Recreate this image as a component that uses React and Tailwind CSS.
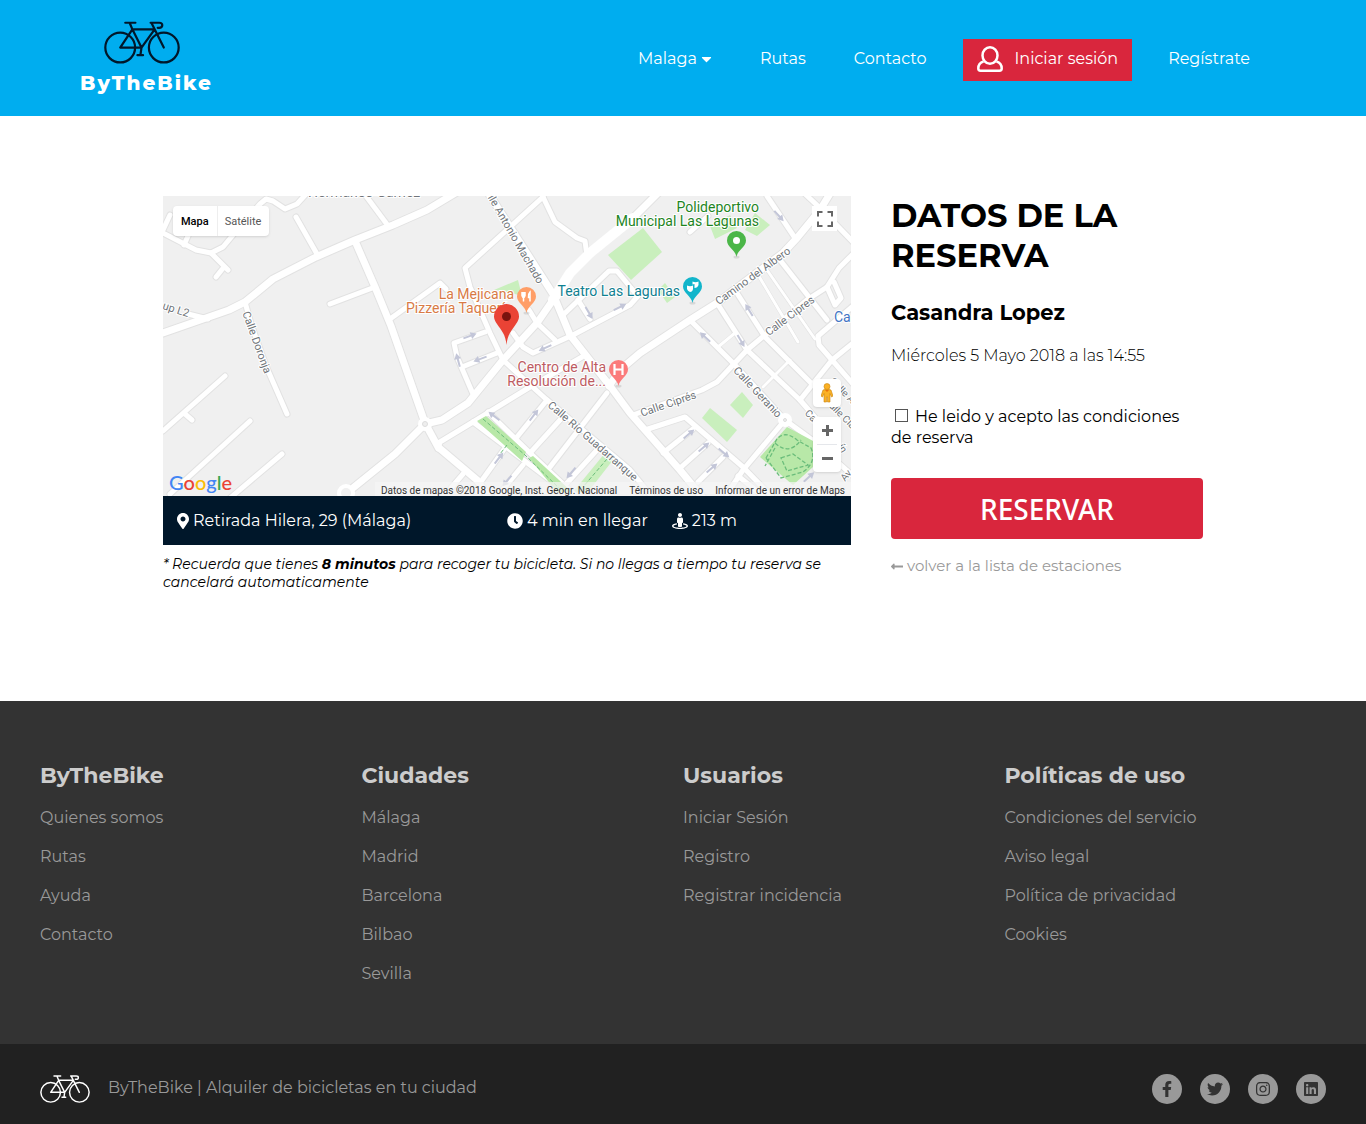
import { FaCaretDown, FaClock, FaFacebookF, FaInstagram, FaLinkedin, FaLongArrowAltLeft, FaMapMarkerAlt, FaStreetView, FaTwitter } from "react-icons/fa";

const wideRoads = [
  "M0 137 L66 114 L82 106 L110 83 L153 61 L192 44 L230 29 L264 14 L294 -4",
  "M180 300 L232 258 L262 228 L279 224 L305 207 L340 164 L374 127 L390 104 L407 77 L427 57 L470 22 L496 -4",
  "M326 -2 L390 98 L407 139 L447 190 L467 217 L517 274 L540 302",
  "M446 190 L457 174 L477 157 L527 124 L554 107 L620 57 L634 42 L657 14 L668 -4",
  "M192 45 L212 91 L228 130 L262 227 L275 251 L314 284 L326 302",
];
const roads = [
  "M-2 36 L33 54 L48 57 L60 51 L70 39 L97 8 L103 3 L110 5 L122 13 L134 8 L145 -4",
  "M7 19 L0 34", "M25 40 L21 49", "M48 57 L65 74", "M61 71 L53 81", "M133 21 L154 58", "M200 -4 L226 31",
  "M167 108 L212 91", "M25 118 L45 123", "M82 106 L88 128 L103 170 L124 218", "M0 235 L62 180", "M22 218 L29 224",
  "M7 298 L87 225", "M66 303 L119 258",
  "M380 1 L302 72 L307 91 L327 137 L340 164 L384 204 L467 274 L490 302",
  "M380 1 L392 26 L414 42 L422 45 L424 60",
  "M227 123 L277 87 L283 93", "M322 136 L291 147 L294 161 L310 198", "M299 171 L334 157",
  "M350 137 L360 151 L370 157 L410 139 L467 109 L475 100 L468 92 L454 75 L446 75 L400 119",
  "M374 127 L392 144", "M366 114 L374 127", "M415 104 L427 123", "M419 161 L367 191 L310 226 L277 246 L275 253",
  "M310 226 L387 284 L405 302", "M325 216 L367 257 L413 300", "M384 204 L354 241", "M397 224 L367 257",
  "M444 197 L387 271", "M434 254 L404 287", "M342 252 L317 287", "M360 269 L332 303", "M300 278 L288 292",
  "M470 219 L539 194 L554 186 L584 154 L644 104 L664 91 L676 72 L690 58",
  "M527 124 L570 167 L622 224", "M622 224 L580 274 L564 298", "M622 224 L652 246 L690 280",
  "M554 107 L584 154 L637 204 L656 226", "M572 94 L602 141 L648 187", "M617 64 L664 124",
  "M690 110 L655 140 L656 149 L669 164 L690 188", "M637 204 L669 164 L690 147", "M604 0 L632 42",
  "M640 -4 L657 12 L690 46", "M482 234 L522 221 L580 271 L610 302", "M500 257 L530 233", "M516 273 L545 247",
  "M535 286 L560 261", "M527 36 L545 20", "M664 91 L672 109 L678 102 L671 86", "M575 280 L600 300",
];
const thinRoads = ["M594 77 L635 146", "M604 74 L652 143", "M555 151 L572 137", "M600 191 L627 164"];
const parks = [
  "445,59 480,32 499,56 468,84", "547,30 567,19 574,32 552,43", "582,34 592,17 607,29 594,40",
  "495,94 502,87 512,101 504,107", "539,222 547,212 574,234 564,246", "567,209 579,196 590,209 580,222",
  "331,94 355,84 359,100 345,96", "442,257 450,264 425,296 410,296",
];
const arrows = [
  [307, 140, -20], [317, 163, 160], [295, 164, 255], [457, 111, -27], [426, 117, 60], [382, 152, 155], [331, 220, 218],
  [371, 219, -52], [336, 262, -52], [408, 277, 130], [344, 285, 130], [542, 141, 222], [586, 114, 238], [578, 145, 60],
  [616, 20, 48], [526, 238, -40], [541, 251, -40], [561, 257, 40], [549, 272, -40], [646, 281, -42],
];
const streetLabels = [
  ["Calle Doronja", 82, 116, 70, 11], ["up L2", 0, 110, 18, 11], ["lle Antonio Machado", 327, 0, 60, 11],
  ["Hermanos Gámez", 145, -3, 0, 14], ["Camino del Albero", 554, 107, -36, 11], ["Calle Cipres", 604, 138, -37, 11],
  ["Calle Ciprés", 478, 218, -19, 11], ["Calle Geranio", 572, 173, 47, 11], ["Calle Río Guadarranque", 386, 208, 41, 11],
  ["Calle A", 668, 184, 45, 10], ["Calle Clavel", 663, 204, 45, 10], ["Calle", 643, 216, 45, 10],
  ["ín", 677, 249, 60, 10], ["Av.", 680, 284, -50, 10],
];

function Bike({ className }) {
  return (
    <svg viewBox="0 0 75 42" fill="none" stroke="currentColor" strokeWidth="2.2" strokeLinejoin="round" strokeLinecap="round" className={className} aria-hidden="true">
      <circle cx="16" cy="26" r="14.7" />
      <circle cx="59" cy="26" r="14.7" />
      <path d="M21 1.5H31M25.5 2L28 8L37 26H16L28 8H50L37 26L36 33M33 33.5H38.5M46 1.5H54.5Q57.5 1.5 57.5 4T54.5 6.5H53M47 2L59 26" />
    </svg>
  );
}

function Pin({ x, y, color, children }) {
  return (
    <g transform={`translate(${x} ${y})`}>
      <ellipse cy="0" rx="3" ry="1.500" fill="#000" opacity="0.1" />
      <path d="M0 0C-1-7-9.500-10-9.500-16.500a9.500 9.500 0 0 1 19 0C9.500-10 1-7 0 0Z" fill={color} />
      {children}
    </g>
  );
}

function Poi({ lines, x, y, anchor, color }) {
  return (
    <g fill={color} stroke="#fff" strokeWidth="2" paintOrder="stroke" textAnchor={anchor} fontSize="14">
      {lines.map((line, i) => (
        <text key={line} x={x} y={y + i * 14}>{line}</text>
      ))}
    </g>
  );
}

function MapDrawing() {
  return (
    <svg viewBox="0 0 688 300" preserveAspectRatio="xMidYMid slice" className="block h-full w-full font-['Roboto',sans-serif]" role="img" aria-label="Mapa de la estación">
      <rect x="-500" y="-300" width="1700" height="900" fill="#f0f0f0" />
      {parks.map((p) => <polygon key={p} points={p} fill="#c9efbd" />)}
      <g fill="none" strokeLinejoin="round" strokeLinecap="round">
        <g stroke="#e2e2e2">
          <g strokeWidth="7">{roads.map((d) => <path key={d} d={d} />)}</g>
          <g strokeWidth="9">{wideRoads.map((d) => <path key={d} d={d} />)}</g>
          <g strokeWidth="4">{thinRoads.map((d) => <path key={d} d={d} />)}</g>
        </g>
        <g stroke="#fff">
          <g strokeWidth="3">{thinRoads.map((d) => <path key={d} d={d} />)}</g>
          <g strokeWidth="5">{roads.map((d) => <path key={d} d={d} />)}</g>
          <g strokeWidth="7">{wideRoads.map((d) => <path key={d} d={d} />)}</g>
        </g>
        <path d="M390 104L407 77L427 57L470 22" stroke="#fff" strokeWidth="10" />
      </g>
      <polygon points="314,225 323,220 363,256 359,265" fill="#b8e8a8" />
      <polygon points="366,262 370,260 409,296 394,296" fill="#b8e8a8" />
      <polygon points="597,261 624,231 652,246 660,262 630,289" fill="#b8e8a8" />
      <g fill="none" stroke="#6bbd7b" strokeDasharray="4 2">
        <path d="M320 223L362 259L398 294M344 249L337 258M444 263L420 291" />
        <path d="M603 262L614 243Q622 234 634 244L648 252Q654 266 640 276L618 282ZM612 247Q626 260 638 244M618 262L630 258L645 269L624 275ZM612 252L602 270" strokeWidth="1.300" />
      </g>
      <g stroke="#ddd">
        <circle cx="262" cy="228" r="7" fill="#fff" stroke="none" />
        <circle cx="262" cy="228" r="2.500" fill="#eee" />
        <circle cx="622" cy="224" r="7" fill="#fff" stroke="none" />
        <circle cx="622" cy="224" r="1.500" fill="#eee" />
        <circle cx="183" cy="297" r="7" fill="#f0f0f0" stroke="#fff" strokeWidth="4" />
      </g>
      {arrows.map(([x, y, a]) => (
        <path key={`${x}-${y}`} transform={`translate(${x} ${y}) rotate(${a})`} d="M-7-1H1V-3.500L7 0L1 3.500V1H-7Z" fill="#c3c6d8" />
      ))}
      <g fill="#70757a" stroke="#fff" strokeWidth="2" paintOrder="stroke">
        {streetLabels.map(([text, x, y, angle, size]) => (
          <text key={`${text}-${x}`} transform={`translate(${x} ${y}) rotate(${angle})`} fontSize={size} dominantBaseline="middle">{text}</text>
        ))}
      </g>
      <Poi lines={["Polideportivo", "Municipal Las Lagunas"]} x={596} y={16} anchor="end" color="#1e851e" />
      <Poi lines={["Teatro Las Lagunas"]} x={517} y={100} anchor="end" color="#0f8090" />
      <Poi lines={["La Mejicana"]} x={351} y={103} anchor="end" color="#d87a45" />
      <Poi lines={["Pizzería Taquería"]} x={243} y={117} anchor="start" color="#d87a45" />
      <Poi lines={["Centro de Alta", "Resolución de..."]} x={443} y={176} anchor="end" color="#bd5b62" />
      <Poi lines={["Ca"]} x={671} y={126} anchor="start" color="#4274c4" />
      <Pin x={573.5} y={61} color="#4bb648"><circle cy="-16.500" r="3.500" fill="#fff" /></Pin>
      <Pin x={529.5} y={107} color="#12b5cb">
        <path d="M-5.500-17.500Q-2.500-16 .5-17.500V-14Q0-11-2.500-11Q-5-12-5.500-14ZM0-21.500Q3-20 6-21.500V-18Q5-15 2-15V-19L0-18.500Z" fill="#fff" />
      </Pin>
      <Pin x={363.5} y={117} color="#ff9e67">
        <path d="M-4.500-21V-17.500Q-4-15.500-3-15.500V-11.500M-1.500-21V-17.500Q-2-15.500-3-15.500V-21M3.500-11.500V-21Q1.500-19 2-15.500H3.500" fill="none" stroke="#fff" strokeWidth="1.500" />
      </Pin>
      <Pin x={455.5} y={190} color="#fb7b7b">
        <path d="M-4-22V-11M4-22V-11M-4-16.500H4" fill="none" stroke="#fff" strokeWidth="2.200" />
      </Pin>
      <path d="M343.500 149C342.500 138 338 134 334 128C332 125 331 123 331 120.500a12.500 12.500 0 0 1 25 0C356 123 355 125 353 128C349 134 344.500 138 343.500 149Z" fill="#ea4335" />
      <circle cx="343.500" cy="120.500" r="4.500" fill="#7a130e" />
    </svg>
  );
}

function MapPanel() {
  return (
    <div className="relative h-[300px] overflow-hidden font-['Roboto',sans-serif]">
      <MapDrawing />
      <div className="absolute left-[10px] top-[10px] flex h-[30px] rounded-sm bg-white text-[11px] shadow">
        <button type="button" className="px-2 pt-0.5 font-medium text-black shadow-[1px_0_0_#eee]">Mapa</button>
        <button type="button" className="px-2 pt-0.5 text-[#565656]">Satélite</button>
      </div>
      <button type="button" aria-label="Pantalla completa" className="absolute right-[14px] top-[10px] flex size-[25px] items-center justify-center bg-white">
        <svg viewBox="0 0 16 16" className="size-4" fill="none" stroke="#666" strokeWidth="2"><path d="M1 5.500V1H5.500M10.500 1H15V5.500M15 10.500V15H10.500M5.500 15H1V10.500" /></svg>
      </button>
      <button type="button" aria-label="Street View" className="absolute bottom-[89px] right-[10px] flex size-7 items-center justify-center rounded-sm bg-white shadow">
        <svg viewBox="0 0 12 20" className="h-5 w-3">
          <path d="M2 7Q6 5 10 7L12 13L10.500 14L9 10.500V19H6.500V14H5.500V19H3V10.500L1.500 14L0 13Z" fill="#fbb124" stroke="#c98510" strokeWidth=".6" />
          <circle cx="6" cy="3.500" r="3" fill="#fbb124" stroke="#c98510" strokeWidth=".6" />
          <path d="M4 7H8L6 9Z" fill="#e8710a" />
        </svg>
      </button>
      <div className="absolute bottom-[24px] right-[10px] flex w-7 flex-col items-center rounded-sm bg-white shadow">
        <button type="button" aria-label="Acercar" className="flex h-[27px] w-7 items-center justify-center">
          <svg viewBox="0 0 11 11" className="size-[11px]" stroke="#666" strokeWidth="3"><path d="M0 5.500H11M5.500 0V11" /></svg>
        </button>
        <span className="h-px w-5 bg-gray-200" />
        <button type="button" aria-label="Alejar" className="flex h-[27px] w-7 items-center justify-center">
          <svg viewBox="0 0 11 11" className="size-[11px]" stroke="#666" strokeWidth="3"><path d="M0 5.500H11" /></svg>
        </button>
      </div>
      <a href="#google" aria-label="Google" className="absolute bottom-0 left-[6px] font-['Lato',sans-serif] text-[20px] leading-[28px] font-medium text-[#4285f4]">
        G<span className="text-[#ea4335]">o</span><span className="text-[#fbbc05]">o</span>g<span className="text-[#34a853]">l</span><span className="text-[#ea4335]">e</span>
      </a>
      <div className="absolute bottom-0 right-0 flex h-[14px] items-center gap-3 bg-[#f5f5f5]/70 px-[6px] pt-[3px] text-[10px] leading-3 text-[#333]">
        <span>Datos de mapas ©2018 Google, Inst. Geogr. Nacional</span>
        <a href="#terminos">Términos de uso</a>
        <a href="#informar">Informar de un error de Maps</a>
      </div>
    </div>
  );
}

function Header() {
  return (
    <header className="flex h-[116px] items-center justify-between bg-[#00adef] px-20 text-white">
      <a href="#inicio" className="flex flex-col items-center">
        <Bike className="mr-2 mt-0.5 h-[43px] w-[76px] text-[#00172a]" />
        <span className="mt-1 text-[20px] font-extrabold leading-[30px] tracking-widest">ByTheBike</span>
      </a>
      <nav className="mr-9 flex items-center gap-12 pt-0.5">
        <button type="button" aria-haspopup="menu" className="flex items-center gap-1">Malaga <FaCaretDown className="w-[11px]" /></button>
        <a href="#rutas">Rutas</a>
        <a href="#contacto">Contacto</a>
        <a href="#iniciar" className="-mx-3 mt-0.5 flex h-[42px] items-center gap-3 bg-[#d9263d] px-[14px]">
          <svg viewBox="0 0 26 26" fill="none" stroke="currentColor" strokeWidth="2.500" className="mb-0.5 size-[26px]" aria-hidden="true">
            <ellipse cx="13" cy="9.500" rx="7.500" ry="8.200" />
            <path d="M6.500 15.500C3 16.500 1.300 19 1.300 22.500Q1.300 24.700 3.500 24.700H22.500Q24.700 24.700 24.700 22.500C24.700 19 23 16.500 19.500 15.500" />
          </svg>
          <span className="pb-0.5">Iniciar sesión</span>
        </a>
        <a href="#registrate">Regístrate</a>
      </nav>
    </header>
  );
}

const footerColumns = [
  ["ByTheBike", ["Quienes somos", "Rutas", "Ayuda", "Contacto"]],
  ["Ciudades", ["Málaga", "Madrid", "Barcelona", "Bilbao", "Sevilla"]],
  ["Usuarios", ["Iniciar Sesión", "Registro", "Registrar incidencia"]],
  ["Políticas de uso", ["Condiciones del servicio", "Aviso legal", "Política de privacidad", "Cookies"]],
];
const socials = [["Facebook", FaFacebookF], ["Twitter", FaTwitter], ["Instagram", FaInstagram], ["LinkedIn", FaLinkedin]];

function Footer() {
  return (
    <footer className="text-[#999]">
      <div className="grid grid-cols-4 bg-[#333] px-10 pb-[41px] pt-[60px]">
        {footerColumns.map(([title, links]) => (
          <section key={title}>
            <h2 className="mb-[17px] text-[22px] font-bold leading-[30px] text-[#ccc]">{title}</h2>
            <ul>
              {links.map((link) => <li key={link} className="h-[39px] leading-5"><a href="#enlace">{link}</a></li>)}
            </ul>
          </section>
        ))}
      </div>
      <div className="flex h-20 items-center justify-between bg-[#212121] px-10 pt-[10px]">
        <div className="flex items-center gap-[18px]">
          <Bike className="h-7 w-[50px] text-white" />
          <p className="pb-0.5">ByTheBike | Alquiler de bicicletas en tu ciudad</p>
        </div>
        <div className="flex gap-[18px]">
          {socials.map(([name, Icon]) => (
            <a key={name} href="#social" aria-label={name} className="flex size-[30px] items-center justify-center rounded-full bg-[#999] text-[#333]"><Icon /></a>
          ))}
        </div>
      </div>
    </footer>
  );
}

export default function App() {
  return (
    <div className="min-h-screen bg-[#212121] font-['Montserrat','Inter',sans-serif] text-[16px] leading-5 text-black">
      <Header />
      <div className="bg-white">
        <main className="mx-auto flex min-h-[585px] max-w-[1040px] gap-10 pt-20">
          <div className="min-w-0 flex-1">
            <MapPanel />
            <div className="flex h-[49px] items-center bg-[#00172a] px-[14px] text-white">
              <p className="flex w-1/2 items-center gap-1"><FaMapMarkerAlt className="w-3" />Retirada Hilera, 29 (Málaga)</p>
              <p className="mr-6 flex items-center gap-1"><FaClock />4 min en llegar</p>
              <p className="flex items-center gap-1"><FaStreetView />213 m</p>
            </div>
            <p className="mt-[10px] text-[14px] italic leading-[18px]">
              * Recuerda que tienes <strong className="font-bold">8 minutos</strong> para recoger tu bicicleta. Si no llegas a tiempo tu reserva se cancelará automaticamente
            </p>
          </div>
          <aside className="w-[312px] shrink-0">
            <h1 className="text-[32px] font-bold leading-10">DATOS DE LA RESERVA</h1>
            <h2 className="mt-6 text-[21px] font-bold leading-[26px]">Casandra Lopez</h2>
            <p className="mt-5 font-light">Miércoles 5 Mayo 2018 a las 14:55</p>
            <label className="mt-10 block leading-[21px]">
              <input type="checkbox" className="ml-1 mr-[7px] size-[13px] appearance-none border border-[#555] bg-white checked:bg-[#555]" />
              He leido y acepto las condiciones de reserva
            </label>
            <button type="button" className="mt-[30px] h-[61px] w-full rounded bg-[#d9263d] font-['Noto_Sans',sans-serif] text-[28px] font-medium text-white">RESERVAR</button>
            <a href="#estaciones" className="mt-[17px] flex items-center gap-1 text-[15px] text-[#999]"><FaLongArrowAltLeft className="w-3" />volver a la lista de estaciones</a>
          </aside>
        </main>
      </div>
      <Footer />
    </div>
  );
}
